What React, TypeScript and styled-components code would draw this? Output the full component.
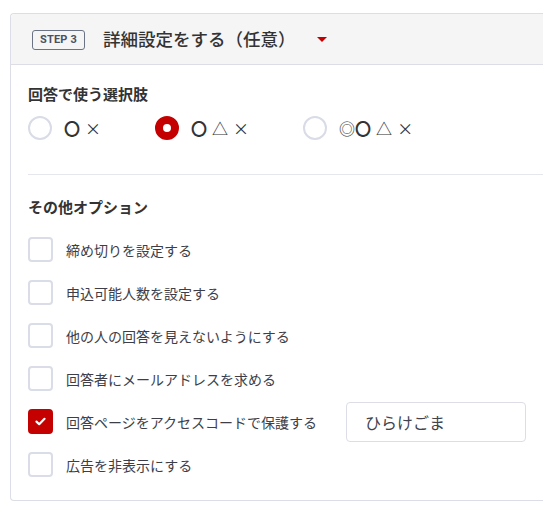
import React, { FC } from 'react';
import styled, { createGlobalStyle } from 'styled-components';

const GlobalStyle = createGlobalStyle`
  html, body {
    margin: 0;
    padding: 0;
    background: #fff;
    overflow: hidden;
  }

  body {
    font-family: "Noto Sans CJK JP", "Noto Sans", sans-serif;
    color: #3a3b45;
  }
`;

const Page = styled.div`
  padding: 13px 0 0 10px;
`;

// the card runs on past the right edge of the window, so no right border is seen
const Card = styled.section`
  border: 1px solid #dcdde6;
  border-right: none;
  border-radius: 4px 0 0 4px;
  background: #fff;
`;

const Header = styled.header`
  display: flex;
  align-items: center;
  height: 50px;
  padding-left: 21px;
  background: #f5f5f6;
  border-bottom: 1px solid #dcdde6;
  border-radius: 4px 0 0 0;
`;

const StepBadge = styled.span`
  display: inline-flex;
  align-items: center;
  justify-content: center;
  box-sizing: border-box;
  width: 53px;
  height: 20px;
  margin-top: 1px;
  border: 1px solid #6c7384;
  border-radius: 3px;
  font-family: Roboto, "Noto Sans", sans-serif;
  font-size: 11px;
  font-weight: 700;
  color: #4a5060;
  letter-spacing: 0.2px;
`;

const Title = styled.h2`
  margin: 0 0 0 18px;
  font-size: 17.5px;
  font-weight: 500;
  color: #333;
  line-height: 1;
`;

const Caret = styled.span`
  width: 0;
  height: 0;
  margin-left: 21px;
  border-left: 5px solid transparent;
  border-right: 5px solid transparent;
  border-top: 5px solid #c40000;
`;

const Body = styled.div`
  padding: 18px 0 23px 17px;
`;

const SectionTitle = styled.h3`
  margin: 0;
  font-size: 15px;
  line-height: 22px;
  font-weight: 700;
  color: #333;
`;

const RadioGroup = styled.div`
  display: flex;
  align-items: center;
  gap: 54px;
  margin-top: 11px;
`;

const RadioItem = styled.label`
  display: flex;
  align-items: center;
  gap: 12px;
`;

const RadioMark = styled.span<{ $checked?: boolean }>`
  box-sizing: border-box;
  width: 24px;
  height: 24px;
  border-radius: 50%;
  border: ${(p) => (p.$checked ? '8px solid #c40000' : '2px solid #d9dce6')};
  background: #fff;
`;

const RadioLabel = styled.span`
  display: flex;
  gap: 5px;
  font-size: 16px;
  line-height: 24px;
  color: #333;
`;

const Symbol = styled.span<{ $bold?: boolean }>`
  font-weight: ${(p) => (p.$bold ? 700 : 400)};
`;

const Divider = styled.hr`
  margin: 34px 0 21px;
  border: none;
  border-top: 1px solid #e6e7ee;
`;

const OptionList = styled.div`
  display: flex;
  flex-direction: column;
  gap: 18px;
  margin-top: 19px;
`;

const OptionRow = styled.label`
  display: flex;
  align-items: center;
  height: 25px;
`;

const CheckBox = styled.span<{ $checked?: boolean }>`
  display: flex;
  align-items: center;
  justify-content: center;
  box-sizing: border-box;
  width: 25px;
  height: 25px;
  flex-shrink: 0;
  border-radius: 4px;
  border: 2px solid ${(p) => (p.$checked ? '#c40000' : '#dadde7')};
  background: ${(p) => (p.$checked ? '#c40000' : '#fff')};
`;

const OptionText = styled.span`
  margin-left: 13px;
  font-size: 14px;
  color: #3d3e48;
  white-space: nowrap;
`;

const CodeInput = styled.div`
  display: flex;
  align-items: center;
  box-sizing: border-box;
  width: 180px;
  height: 40px;
  margin-left: 29px;
  padding-left: 18px;
  border: 1px solid #dcdde6;
  border-radius: 4px;
  font-size: 16px;
  color: #42434d;
`;

// each choice is a list of symbols; groups of symbols written together share one cell
const choices = [['〇', '×'], ['〇', '△', '×'], ['◎〇', '△', '×']];

const options = [
  '締め切りを設定する',
  '申込可能人数を設定する',
  '他の人の回答を見えないようにする',
  '回答者にメールアドレスを求める',
  '回答ページをアクセスコードで保護する',
  '広告を非表示にする',
];

const CheckIcon: FC = () => (
  <svg width="11" height="9" viewBox="0 0 11 9" fill="none">
    <path d="M1.5 4.6 L4.2 7.2 L9.5 1.8" stroke="#fff" strokeWidth="2.2" strokeLinecap="round" strokeLinejoin="round" />
  </svg>
);

const renderSymbols = (cell: string) => cell.split('').map((ch, i) => (
  <Symbol key={i} $bold={ch === '〇'}>{ch}</Symbol>
));

const App: FC = () => (
  <Page>
    <GlobalStyle />
    <Card>
      <Header>
        <StepBadge>STEP 3</StepBadge>
        <Title>詳細設定をする（任意）</Title>
        <Caret />
      </Header>
      <Body>
        <SectionTitle>回答で使う選択肢</SectionTitle>
        <RadioGroup>
          {choices.map((c, i) => (
            <RadioItem key={c.join('')}>
              <RadioMark $checked={i === 1} />
              <RadioLabel>
                {c.map((cell) => <span key={cell}>{renderSymbols(cell)}</span>)}
              </RadioLabel>
            </RadioItem>
          ))}
        </RadioGroup>
        <Divider />
        <SectionTitle>その他オプション</SectionTitle>
        <OptionList>
          {options.map((o, i) => (
            <OptionRow key={o}>
              <CheckBox $checked={i === 4}>{i === 4 && <CheckIcon />}</CheckBox>
              <OptionText>{o}</OptionText>
              {i === 4 && <CodeInput>ひらけごま</CodeInput>}
            </OptionRow>
          ))}
        </OptionList>
      </Body>
    </Card>
  </Page>
);

export default App;
